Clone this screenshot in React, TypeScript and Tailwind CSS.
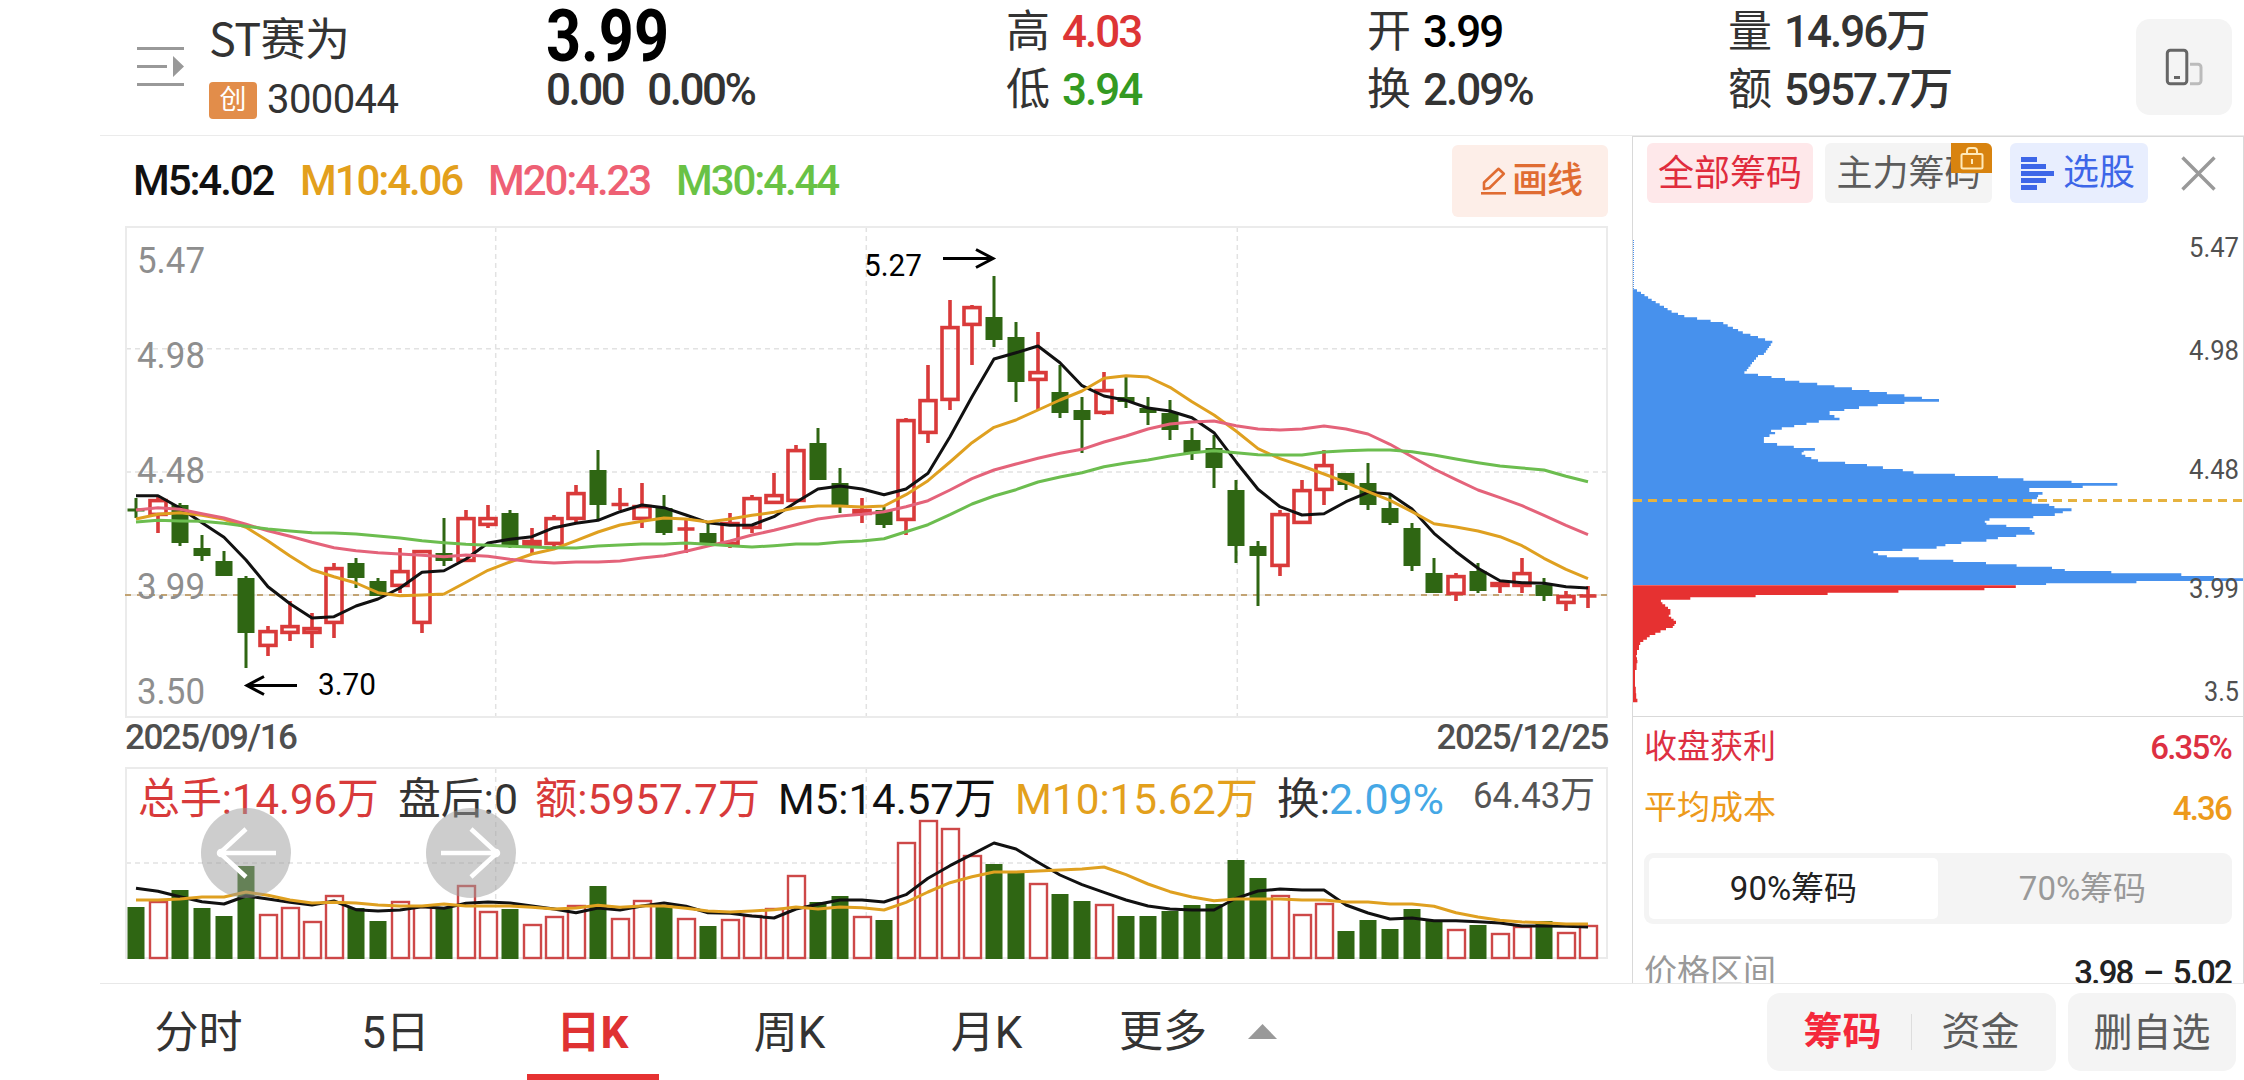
import { clsx } from 'clsx';

// [dir, high, bodyTop, bodyBottom, low] in chart units, one row per trading day
type Candle = ['u' | 'd', number, number, number, number];

const candles: Candle[] = [
    ['d', 498, 508.5, 511.5, 518],
    ['u', 497, 499, 516, 533],
    ['d', 503, 505, 543, 546],
    ['d', 535, 548, 556, 561],
    ['d', 551, 561, 576, 576],
    ['d', 576, 578, 633, 668],
    ['u', 626, 630, 647, 656],
    ['u', 601, 625, 634, 641],
    ['u', 613, 627, 634, 648],
    ['u', 563, 567, 624, 638],
    ['d', 558, 563, 578, 588],
    ['d', 578, 581, 596, 596],
    ['u', 548, 570, 587, 593],
    ['u', 550, 550, 624, 633],
    ['d', 518, 553, 561, 566],
    ['u', 510, 517, 562, 562],
    ['u', 505, 517, 526, 528],
    ['d', 510, 513, 547, 548],
    ['u', 528, 540, 546, 555],
    ['u', 515, 517, 545, 550],
    ['u', 485, 492, 520, 523],
    ['d', 450, 470, 505, 520],
    ['u', 488, 503, 506, 510],
    ['u', 483, 505, 520, 528],
    ['d', 495, 508, 533, 535],
    ['u', 520, 527, 531, 553],
    ['d', 523, 533, 543, 543],
    ['u', 513, 522, 545, 548],
    ['u', 495, 497, 529, 533],
    ['u', 473, 494, 504, 504],
    ['u', 445, 449, 502, 502],
    ['d', 428, 443, 480, 480],
    ['d', 468, 483, 507, 513],
    ['u', 498, 509, 515, 523],
    ['d', 507, 510, 525, 528],
    ['u', 418, 419, 521, 535],
    ['u', 365, 399, 434, 443],
    ['u', 300, 326, 401, 410],
    ['u', 305, 306, 326, 365],
    ['d', 276, 317, 340, 347],
    ['d', 322, 337, 382, 402],
    ['u', 332, 371, 381, 410],
    ['d', 365, 392, 413, 418],
    ['d', 397, 410, 420, 453],
    ['u', 372, 389, 414, 415],
    ['d', 376, 397, 402, 408],
    ['d', 397, 408, 413, 425],
    ['d', 400, 413, 430, 440],
    ['d', 428, 440, 453, 460],
    ['d', 435, 448, 468, 488],
    ['d', 480, 490, 546, 563],
    ['d', 541, 546, 556, 606],
    ['u', 510, 513, 567, 576],
    ['u', 480, 489, 524, 524],
    ['u', 450, 464, 491, 505],
    ['d', 473, 473, 485, 490],
    ['d', 463, 483, 505, 510],
    ['d', 495, 508, 523, 525],
    ['d', 523, 528, 566, 571],
    ['d', 558, 573, 593, 593],
    ['u', 573, 575, 595, 601],
    ['d', 563, 571, 591, 593],
    ['u', 582, 582, 587, 593],
    ['u', 558, 572, 587, 593],
    ['d', 578, 585, 596, 601],
    ['u', 591, 595, 604, 611],
    ['u', 586, 594.5, 597.5, 608],
];

const ma5 = [
    495.7, 495.7, 508, 522.7, 537.3, 560, 586.7, 603.7, 618, 616.7, 606, 599, 588, 572.3, 570.7, 559, 543,
    539.3, 536.7, 527.7, 523.3, 520.3, 511.7, 505, 507.7, 515, 522.7, 525.3, 525, 516.7, 502.3, 489, 486,
    489, 494.7, 489, 473.3, 436.7, 396.7, 359, 352.7, 346, 362.7, 385.7, 396, 400.3, 408, 411, 417.7, 432.7,
    461.7, 489.3, 506.7, 515, 513.7, 501.7, 492.3, 494, 509, 533.3, 551.7, 568.3, 580.7, 582.7, 583.3,
    586.7, 588,
];
const ma10 = [
    519, 514.3, 512.7, 515.3, 519.3, 527.3, 541, 556, 569.7, 576.7, 583, 592.7, 595.7, 595, 594, 582.3,
    570.3, 562, 554, 549, 540.7, 532, 525, 521.3, 518, 519, 522, 519, 515.3, 512.3, 507.7, 506, 506, 507,
    506, 494.7, 480.7, 462, 442.7, 427.3, 420, 410, 400, 391, 378.3, 375.7, 377, 387.3, 401.7, 415, 431,
    448.7, 458.7, 466, 474, 482.3, 491.7, 500.3, 511.7, 523.7, 527, 531, 536.7, 545.7, 558.3, 569.3, 578.7,
];
const ma20 = [
    510, 507.7, 509.3, 513.7, 518, 524.3, 530.7, 536.3, 542.3, 547.7, 550.7, 552.7, 554, 555.3, 556.7, 555,
    556.3, 559.3, 561.7, 563, 562, 562, 561, 558, 555.7, 551.3, 546, 541, 535, 530.3, 524.7, 519, 516,
    514.3, 511.7, 506.7, 500.7, 490, 478.7, 470, 464, 458.3, 453.3, 449.3, 442, 436, 429, 424, 422, 421,
    425.7, 429, 430, 429, 426, 429, 434, 444.3, 456.7, 469, 479.7, 490, 497.7, 505.7, 515.3, 525.3, 534.7,
];
const ma30 = [
    522, 520.3, 521, 521.3, 523.3, 526.3, 529, 531, 532.7, 533, 534, 536, 538, 540.7, 542.7, 544.3, 545.3,
    546.3, 547, 547.7, 548, 546, 545, 544, 544, 543, 544.3, 545.7, 547, 545.7, 544, 544, 542, 541, 538.7,
    531.7, 524.7, 514.7, 504, 496, 489.7, 482, 477, 472.7, 466.7, 463, 460, 456, 452.7, 450.7, 452.7, 454.7,
    455, 455, 452, 450.7, 450, 450, 451.7, 455, 459, 462.7, 466, 468, 470, 476.3, 481.7,
];

const volumes = [
    907, 901, 890, 908, 916, 866, 914, 907, 921, 895, 908, 921, 901, 906, 907, 885, 911, 909, 924, 916, 905,
    886, 918, 900, 907, 918, 926, 919, 915, 908, 875, 902, 896, 916, 920, 842, 820, 828, 855, 864, 873, 883,
    894, 901, 904, 916, 916, 911, 905, 904, 860, 878, 895, 914, 903, 931, 920, 929, 909, 921, 929, 925, 933,
    926, 921, 932, 925,
];
const vol5 = [
    888.3, 891.3, 896.7, 901.7, 904, 896, 899, 902.3, 905, 901, 909.7, 911, 910, 906.7, 908.3, 903.3, 902,
    903, 906, 909, 912.7, 908, 910, 906, 903, 906.3, 912.7, 913.3, 916, 918, 909, 904.3, 900, 900, 902,
    894.7, 878.3, 865.7, 854.3, 843, 849, 862.3, 875, 884.7, 892.3, 900, 906, 909, 910, 910, 898.3, 891,
    889, 890, 890, 905, 913, 919, 918, 920.7, 920.7, 921.7, 923, 926, 926, 926.3, 927,
];
const vol10 = [
    900, 900, 899, 897, 897, 892, 895.3, 900, 903, 902.3, 903, 905, 906, 906, 904, 906, 906, 906, 907.3,
    909, 908, 905.3, 907.3, 906, 906, 908.3, 911, 912, 911, 909.7, 907, 909, 907, 907.7, 910, 902.3, 892,
    882.7, 876.7, 872, 872, 871, 870, 869, 867, 874.7, 884, 891.7, 897, 900.7, 899, 899, 899, 900, 900,
    902, 902, 904, 904, 906.3, 912.7, 917, 920.3, 922, 922.7, 924, 924,
];

// chip distribution: [row top, bar end]; a bar runs until the next row starts
const chipsAbove = [
    [208, 43], [215, 53], [222, 62], [229, 71], [236, 80], [243, 90], [250, 100], [257, 111], [264, 120],
    [271, 130], [278, 146], [285, 162], [292, 194], [299, 228], [306, 260], [313, 271], [320, 284],
    [327, 297], [334, 309], [341, 328], [348, 347], [355, 365], [362, 383], [370, 379], [378, 375],
    [384, 371], [391, 367], [398, 362], [405, 347], [412, 342], [419, 337], [426, 332], [433, 328],
    [440, 323], [447, 319], [454, 313], [461, 347], [468, 381], [474, 415], [482, 451], [488, 496],
    [496, 539], [502, 583], [510, 627], [516, 671], [523, 715], [530, 759], [537, 802], [545, 715],
    [552, 648], [559, 601], [567, 564], [573, 527], [585, 539], [593, 552], [601, 500], [608, 469],
    [615, 438], [622, 407], [629, 380], [636, 390], [643, 376], [651, 362], [669, 395], [677, 437],
    [684, 490], [692, 462], [697, 457], [704, 466], [711, 481], [718, 498], [725, 566], [732, 621],
    [739, 661], [747, 711], [754, 738], [761, 842], [768, 950], [775, 1014], [782, 1135], [789, 1250],
    [797, 1163], [804, 1029], [816, 1062], [824, 1051], [832, 1048], [838, 1035], [851, 1079],
    [858, 1092], [865, 1135], [874, 1113], [880, 1093], [888, 1039], [895, 929], [902, 917], [908, 921],
    [914, 971], [921, 1030], [930, 1036], [936, 1042], [944, 996], [951, 950], [958, 921], [965, 858],
    [972, 818], [979, 796], [986, 710], [993, 637], [1000, 649], [1006, 671], [1012, 751], [1019, 838],
    [1026, 920], [1033, 997], [1040, 1086], [1047, 1118], [1053, 1235], [1060, 1411], [1068, 1493],
    [1075, 1568], [1083, 1298], [1090, 1071],
];
const chipsBelow = [
    [1096, 995], [1104, 916], [1111, 700], [1118, 522], [1125, 341], [1132, 177], [1139, 103],
    [1147, 107], [1153, 114], [1160, 121], [1167, 127], [1184, 123], [1190, 129], [1196, 135],
    [1202, 141], [1212, 137], [1218, 133], [1224, 116], [1231, 102], [1238, 89], [1245, 75], [1252, 68],
    [1259, 59], [1266, 51], [1275, 48], [1290, 43], [1305, 41], [1312, 43], [1320, 44], [1330, 42],
    [1350, 38], [1400, 40], [1420, 41], [1436, 44],
];

const xAt = (i: number) => 136 + i * 22;
const toPoints = (ys: number[]) => ys.map((y, i) => `${xAt(i)},${y}`).join(' ');

function chipPath(rows: number[][], end: number) {
    const px = (v: number) => 1633 + (v - 33) / 2.513;
    const py = (v: number) => 220 + v / 3;
    const steps = rows.map(([y, x], i) => {
        const next = i + 1 < rows.length ? rows[i + 1][0] : end;
        return `H${px(x).toFixed(1)}V${py(next).toFixed(1)}`;
    });
    return `M1633 ${py(rows[0][0]).toFixed(1)}${steps.join('')}H1633Z`;
}

function Label({
    x,
    y,
    w,
    size,
    fill,
    children,
}: {
    x: number;
    y: number;
    w: number;
    size: number;
    fill: string;
    children: string;
}) {
    return (
        <text x={x} y={y} fontSize={size} fill={fill} textLength={w} lengthAdjust="spacingAndGlyphs">
            {children}
        </text>
    );
}

function PriceChart() {
    return (
        <svg className="block h-[492px] w-[1483px]" viewBox="125 226 1483 492">
            <g stroke="#e2e2e2" strokeWidth="1.5" strokeDasharray="5 4" fill="none">
                <path d="M126 348.7H1607M126 472H1607" />
                <path d="M495.7 227V717M866.3 227V717M1237.3 227V717" />
            </g>
            <rect x="126" y="227" width="1481" height="490" fill="none" stroke="#ebebeb" strokeWidth="2" />
            <path d="M125 595H1607" stroke="#eeece8" strokeWidth="2" />
            <path d="M125 595H1607" stroke="#c2a373" strokeWidth="2" strokeDasharray="6 6" />
            <g>
                <Label x={137} y={273} w={68} size={37} fill="#8e8e8e">5.47</Label>
                <Label x={137} y={368} w={68} size={37} fill="#8e8e8e">4.98</Label>
                <Label x={137} y={483} w={68} size={37} fill="#8e8e8e">4.48</Label>
                <Label x={137} y={599} w={68} size={37} fill="#8e8e8e">3.99</Label>
                <Label x={137} y={704} w={68} size={37} fill="#8e8e8e">3.50</Label>
            </g>
            {candles.map(([dir, high, top, bottom, low], i) => {
                const x = xAt(i);
                if (dir === 'd')
                    return (
                        <g key={i} fill="#2f6613">
                            <rect x={x - 1.5} y={high} width="3" height={low - high} />
                            <rect x={x - 8.5} y={top} width="17" height={bottom - top} />
                        </g>
                    );
                return (
                    <g key={i} stroke="#d93a3a" strokeWidth="3.6" fill="none">
                        <path d={`M${x} ${high}V${top + 1}M${x} ${bottom - 1}V${low}`} />
                        {bottom - top > 4 ? (
                            <rect x={x - 8} y={top + 1.6} width="16" height={bottom - top - 3.2} />
                        ) : (
                            <path d={`M${x} ${top}V${bottom}M${x - 8.5} ${(top + bottom) / 2}h17`} />
                        )}
                    </g>
                );
            })}
            <g fill="none" strokeWidth="3" strokeLinejoin="round">
                <polyline points={toPoints(ma5)} stroke="#111111" />
                <polyline points={toPoints(ma10)} stroke="#dfa020" />
                <polyline points={toPoints(ma20)} stroke="#e4637a" />
                <polyline points={toPoints(ma30)} stroke="#6cbd4f" />
            </g>
            <g stroke="#000" strokeWidth="3" fill="none">
                <path d="M943 258.5H993M976 249.5L993 258.5L976 267.5" />
                <path d="M297 685.5H247M264 676.5L247 685.5L264 694.5" />
            </g>
            <Label x={864} y={276} w={58} size={31} fill="#000">5.27</Label>
            <Label x={318} y={695} w={58} size={31} fill="#000">3.70</Label>
        </svg>
    );
}

function VolumeChart() {
    return (
        <svg className="block h-[193px] w-[1483px]" viewBox="125 767 1483 193">
            <g stroke="#e2e2e2" strokeWidth="1.5" strokeDasharray="5 4" fill="none">
                <path d="M126 863H1607" />
                <path d="M495.7 768V958M866.3 768V958M1237.3 768V958" />
            </g>
            <rect x="126" y="768" width="1481" height="190" fill="none" stroke="#ebebeb" strokeWidth="2" />
            {volumes.map((top, i) =>
                candles[i][0] === 'd' ? (
                    <rect key={i} x={xAt(i) - 8.5} y={top} width="17" height={959 - top} fill="#2f6613" />
                ) : (
                    <rect
                        key={i}
                        x={xAt(i) - 8}
                        y={top + 1}
                        width="17"
                        height={957 - top}
                        fill="#fff"
                        stroke="#cd4848"
                        strokeWidth="2.4"
                    />
                ),
            )}
            <g fill="none" strokeWidth="3" strokeLinejoin="round">
                <polyline points={toPoints(vol5)} stroke="#111111" />
                <polyline points={toPoints(vol10)} stroke="#dfa020" />
            </g>
            <Label x={138} y={814} w={241} size={43} fill="#d83a3a">总手:14.96万</Label>
            <Label x={398} y={814} w={120} size={43} fill="#333333">盘后:0</Label>
            <Label x={535} y={814} w={225} size={43} fill="#d83a3a">额:5957.7万</Label>
            <Label x={778} y={814} w={218} size={43} fill="#111111">M5:14.57万</Label>
            <Label x={1015} y={814} w={243} size={43} fill="#e3a01c">M10:15.62万</Label>
            <Label x={1277} y={814} w={53} size={43} fill="#333333">换:</Label>
            <Label x={1329} y={814} w={115} size={43} fill="#45a8e6">2.09%</Label>
            <Label x={1473} y={808} w={122} size={37} fill="#555555">64.43万</Label>
        </svg>
    );
}

function RoundArrow({ flip, className }: { flip?: boolean; className: string }) {
    return (
        <button
            className={clsx(
                'absolute top-[41px] flex size-[90px] items-center justify-center rounded-full bg-[#9b9b9b]/50',
                className,
            )}
        >
            <svg
                className={clsx('size-[90px]', flip && '-scale-x-100')}
                viewBox="0 0 90 90"
                fill="none"
                stroke="#fff"
                strokeWidth="4.5"
            >
                <path d="M75 45H19M45 21L19 45L45 69" strokeLinejoin="round" />
                <circle cx="20" cy="45" r="2" fill="#fff" />
            </svg>
        </button>
    );
}

function Stat({ label, value, tone }: { label: string; value: string; tone?: string }) {
    return (
        <div className="flex h-[58px] gap-[12px] text-[44px] leading-[58px]">
            <span>{label}</span>
            <span className={clsx('font-medium tracking-[-2px]', tone)}>{value}</span>
        </div>
    );
}

function Header() {
    return (
        <header className="ml-[100px] flex h-[136px] border-b border-[#ebebeb] pl-[37px] text-[#333333]">
            <svg className="mt-[46px] h-[40px] w-[72px]" viewBox="0 0 72 40" fill="#999">
                <path d="M0 1h47v3H0zM0 19h30v3H0zM0 37h47v3H0zM36 10L47 20.5L36 31z" />
            </svg>
            <div className="w-[337px] pt-[6px]">
                <div className="h-[64px] font-['Noto_Sans_CJK_SC',sans-serif] text-[45px] leading-[62px] tracking-[-0.6px]">
                    ST赛为
                </div>
                <div className="flex h-[60px] items-center gap-[10px]">
                    <span className="flex h-[37px] w-[48px] items-center justify-center rounded-[4px] bg-[#e28d4a] text-[27px] leading-none text-white">
                        创
                    </span>
                    <span className="text-[40px] leading-[60px] tracking-[-0.6px]">300044</span>
                </div>
            </div>
            <div className="w-[460px]">
                <div className="h-[61px] origin-left scale-x-[0.85] text-[72px] font-bold leading-[74px] text-black">
                    3.99
                </div>
                <div className="flex gap-[24px] text-[44px] font-medium leading-[58px] tracking-[-2.5px]">
                    <span>0.00</span>
                    <span>0.00%</span>
                </div>
            </div>
            <div className="w-[361px] pt-[3px]">
                <Stat label="高" value="4.03" tone="text-[#dd3535]" />
                <Stat label="低" value="3.94" tone="text-[#349a22]" />
            </div>
            <div className="w-[361px] pt-[3px]">
                <Stat label="开" value="3.99" tone="text-black" />
                <Stat label="换" value="2.09%" />
            </div>
            <div className="pt-[3px]">
                <Stat label="量" value="14.96万" />
                <Stat label="额" value="5957.7万" />
            </div>
            <button className="mt-[19px] mr-[12px] ml-auto flex size-[96px] items-center justify-center rounded-[14px] bg-[#f4f4f4]">
                <svg className="h-[38px] w-[38px]" viewBox="0 0 38 38" fill="none" strokeWidth="3">
                    <rect x="2.3" y="2.3" width="19.5" height="33.4" rx="3" stroke="#666" />
                    <path d="M9 29.5h6" stroke="#666" />
                    <path d="M25 16.3h8a3 3 0 0 1 3 3v13.4a3 3 0 0 1-3 3h-8" stroke="#bbb" />
                </svg>
            </button>
        </header>
    );
}

function ChipPanel() {
    return (
        <aside className="flex w-[612px] flex-col overflow-hidden border-x border-t border-[#d9d9d9]">
            <div className="flex h-[67px] shrink-0 items-start pt-[6px] pl-[14px] text-[36px] leading-[62px]">
                <button className="h-[60px] w-[166px] rounded-[6px] bg-[#fee8ea] text-[#e02c3d]">全部筹码</button>
                <button className="relative ml-[12px] h-[60px] w-[167px] rounded-[6px] bg-[#f4f4f4] text-[#5c5c5c]">
                    主力筹码
                    <span className="absolute top-0 right-0 flex h-[30px] w-[41px] items-center justify-center rounded-tr-[6px] bg-[#d8830f]">
                        <svg className="h-[24px] w-[24px]" viewBox="0 0 24 24" fill="none" stroke="#ffe9b8" strokeWidth="2">
                            <rect x="1.5" y="8" width="21" height="14.5" rx="1.5" />
                            <path d="M7 8V5a3 3 0 0 1 3-3h4a3 3 0 0 1 3 3v3M12 13v5" />
                        </svg>
                    </span>
                </button>
                <button className="ml-[18px] flex h-[60px] w-[138px] items-center gap-[9px] rounded-[6px] bg-[#e8eefe] pl-[11px] text-[#3d66e8]">
                    <svg className="h-[33px] w-[33px]" viewBox="0 0 33 33" fill="currentColor">
                        <path d="M0 0h16v5H0zM0 7h25v5H0zM0 14h33v5H0zM0 21h25v5H0zM0 28h16v5H0z" />
                    </svg>
                    <span>选股</span>
                </button>
                <svg className="mt-[13px] ml-[33px] size-[35px]" viewBox="0 0 35 35" stroke="#999" strokeWidth="3.4">
                    <path d="M1.5 1.5L33.5 33.5M33.5 1.5L1.5 33.5" />
                </svg>
            </div>
            <svg className="block h-[512px] w-[610px] shrink-0" viewBox="1633 204 610 512">
                <path d="M1633.5 240V290" stroke="#4a90ec" strokeDasharray="1 1" />
                <path d={chipPath(chipsAbove, 1095)} fill="#4791ed" />
                <path d={chipPath(chipsBelow, 1447)} fill="#e63131" />
                <path d="M1633 500.5H2243" stroke="#e6b23e" strokeWidth="3" strokeDasharray="9 6" />
                <Label x={2189} y={257} w={50} size={28} fill="#505050">5.47</Label>
                <Label x={2189} y={360} w={50} size={28} fill="#505050">4.98</Label>
                <Label x={2189} y={479} w={50} size={28} fill="#505050">4.48</Label>
                <Label x={2189} y={598} w={50} size={28} fill="#505050">3.99</Label>
                <Label x={2204} y={701} w={35} size={28} fill="#505050">3.5</Label>
            </svg>
            <div className="border-t border-[#d9d9d9] pr-[12px] pl-[11px] text-[33px]">
                <div className="flex h-[61px] items-center justify-between text-[#dd3042]">
                    <span className="-mt-[2px]">收盘获利</span>
                    <span className="font-medium tracking-[-1.8px]">6.35%</span>
                </div>
                <div className="flex h-[62px] items-center justify-between text-[#ed9a1b]">
                    <span className="-mt-[2px]">平均成本</span>
                    <span className="font-medium tracking-[-1.8px]">4.36</span>
                </div>
                <div className="-mr-px mt-[13px] flex h-[71px] rounded-[9px] bg-[#f4f4f4] p-[5px] leading-[62px]">
                    <button className="w-[289px] rounded-[5px] bg-white text-[#222222]">90%筹码</button>
                    <button className="flex-1 text-[#999999]">70%筹码</button>
                </div>
                <div className="mt-[18px] flex h-[62px] items-center justify-between text-[#999999]">
                    <span className="-mt-[2px]">价格区间</span>
                    <span className="font-medium tracking-[-1.8px] text-[#222222] [word-spacing:4px]">3.98 – 5.02</span>
                </div>
            </div>
        </aside>
    );
}

const periods = ['分时', '5日', '日K', '周K', '月K'];

function BottomBar() {
    return (
        <footer className="ml-[100px] flex h-[97px] border-t border-[#e8e8e8] text-[44px] text-[#333333]">
            <nav className="flex">
                {periods.map((name) => {
                    const active = name === '日K';
                    return (
                        <button
                            key={name}
                            className={clsx(
                                'flex w-[197px] flex-col items-center',
                                active && 'font-bold text-[#df3232]',
                            )}
                        >
                            <span className="h-[90px] leading-[98px]">{name}</span>
                            {active && <span className="h-[6px] w-[132px] bg-[#e63232]" />}
                        </button>
                    );
                })}
                <button className="ml-[34px] flex items-center gap-[41px] leading-[98px]">
                    更多
                    <svg className="-mt-[2px] h-[15px] w-[29px]" viewBox="0 0 29 15" fill="#999">
                        <path d="M14.5 0L29 15H0z" />
                    </svg>
                </button>
            </nav>
            <div className="mt-[9px] mr-[8px] ml-auto flex h-[78px] gap-[12px] text-[39px] leading-[80px] text-[#5c5c5c]">
                <div className="flex w-[289px] items-center rounded-[13px] bg-[#f4f4f4]">
                    <button className="w-[149px] pl-[2px] font-bold text-[#f4283b]">筹码</button>
                    <span className="h-[36px] w-px -translate-x-[5px] bg-[#dddddd]" />
                    <button className="w-[127px]">资金</button>
                </div>
                <button className="w-[168px] rounded-[13px] bg-[#f4f4f4]">删自选</button>
            </div>
        </footer>
    );
}

export default function App() {
    return (
        <main className="h-[1080px] w-[2244px] overflow-hidden bg-white font-['Roboto','Noto_Sans_CJK_SC',sans-serif]">
            <Header />
            <div className="flex h-[847px]">
                <section className="w-[1632px] pl-[125px]">
                    <div className="flex h-[90px] w-[1483px] items-center text-[42px] font-medium leading-none tracking-[-2.1px]">
                        <span className="w-[167px] pl-[8px] text-[#111111]">M5:4.02</span>
                        <span className="w-[188px] pl-[8px] text-[#e3a01c]">M10:4.06</span>
                        <span className="w-[188px] pl-[8px] text-[#ee6074]">M20:4.23</span>
                        <span className="pl-[8px] text-[#69c245]">M30:4.44</span>
                        <button className="ml-auto flex h-[72px] w-[156px] items-center rounded-[6px] bg-[#fdeee8] pl-[29px] text-[36px] leading-[74px] tracking-[-1px] text-[#e06c32]">
                            <svg className="mr-[6px] h-[28px] w-[25px]" viewBox="0 0 25 28" fill="none" stroke="currentColor" strokeWidth="2.6">
                                <path d="M0 26.3h25" />
                                <path d="M3 15.5L17.5 1.8L22.8 6.8L8.5 21L3 22z" strokeLinejoin="round" />
                            </svg>
                            画线
                        </button>
                    </div>
                    <PriceChart />
                    <div className="flex h-[49px] w-[1483px] justify-between text-[35px] font-medium leading-[39px] tracking-[-1.5px] text-[#4f4f4f]">
                        <span>2025/09/16</span>
                        <span>2025/12/25</span>
                    </div>
                    <div className="relative">
                        <VolumeChart />
                        <RoundArrow className="left-[76px]" />
                        <RoundArrow className="left-[301px]" flip />
                    </div>
                </section>
                <ChipPanel />
            </div>
            <BottomBar />
        </main>
    );
}
